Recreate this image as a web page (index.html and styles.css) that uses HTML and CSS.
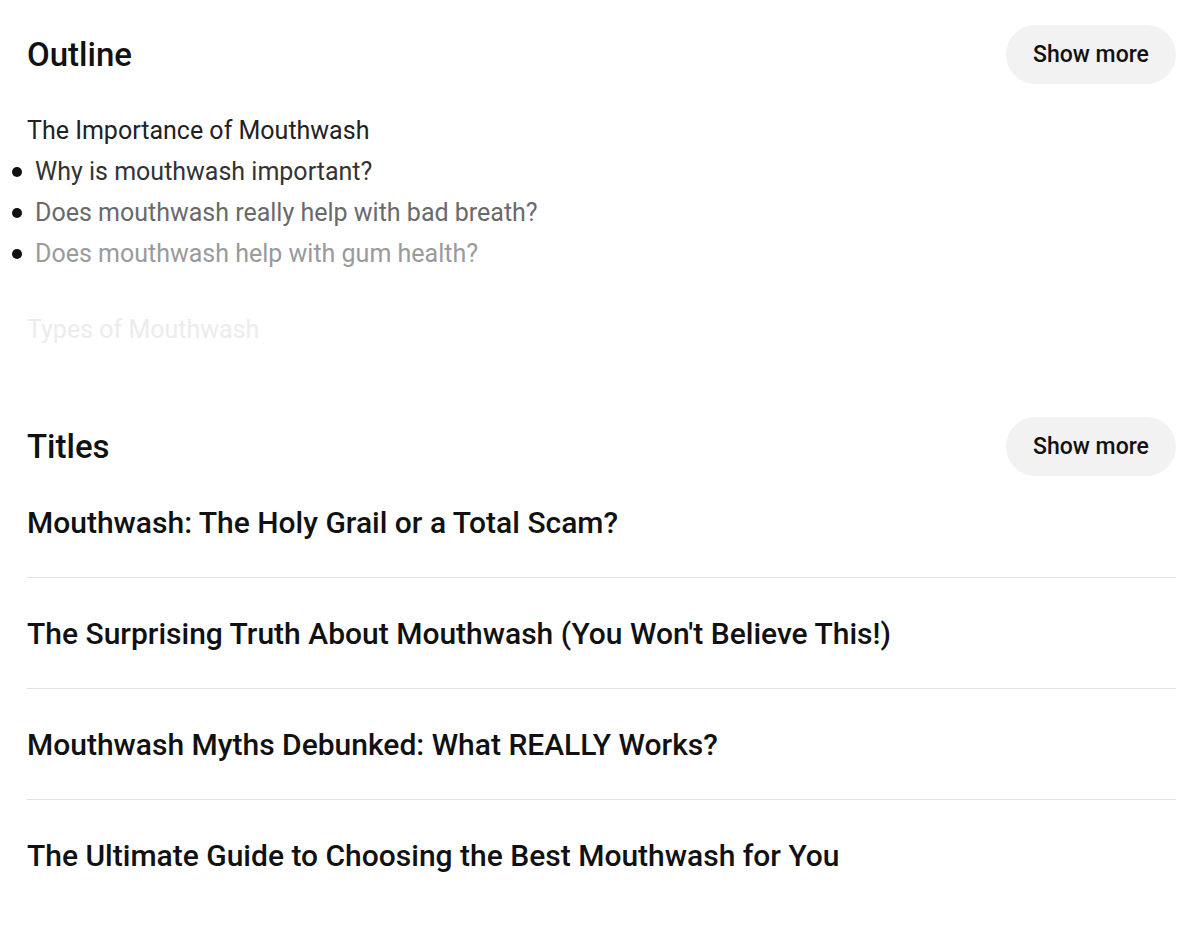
FILE: index.html
```html
<!DOCTYPE html>
<html>
<head>
<meta charset="utf-8">
<link rel="stylesheet" href="styles.css">
</head>
<body>
<div class="page">
  <section class="outline">
    <div class="head">
      <h2 class="title">Outline</h2>
      <button class="more">Show more</button>
    </div>
    <div class="outline-body">
      <p class="sec c1">The Importance of Mouthwash</p>
      <ul class="items">
        <li class="c2">Why is mouthwash important?</li>
        <li class="c3">Does mouthwash really help with bad breath?</li>
        <li class="c4">Does mouthwash help with gum health?</li>
      </ul>
      <p class="sec c5">Types of Mouthwash</p>
    </div>
  </section>
  <section class="titles">
    <div class="head">
      <h2 class="title">Titles</h2>
      <button class="more">Show more</button>
    </div>
    <ul class="tlist">
      <li>Mouthwash: The Holy Grail or a Total Scam?</li>
      <li>The Surprising Truth About Mouthwash (You Won't Believe This!)</li>
      <li>Mouthwash Myths Debunked: What REALLY Works?</li>
      <li>The Ultimate Guide to Choosing the Best Mouthwash for You</li>
    </ul>
  </section>
</div>
</body>
</html>
```
FILE: styles.css
```css
* { box-sizing: border-box; }
body {
  margin: 0;
  background: #fff;
  font-family: Roboto, "Noto Sans", sans-serif;
  color: #111;
}
.page {
  padding: 25px 24px 0 27px;
}
.head {
  display: flex;
  justify-content: space-between;
  align-items: center;
  height: 59px;
}
.title {
  margin: 0;
  font-size: 33px;
  font-weight: 500;
  color: #111;
}
.more {
  width: 170px;
  height: 59px;
  border: none;
  border-radius: 30px;
  background: #f2f2f2;
  font-family: Roboto, sans-serif;
  font-size: 23px;
  font-weight: 500;
  color: #111;
  padding: 0;
}
.outline-body {
  margin-top: 26px;
  font-size: 25px;
  line-height: 41px;
}
.sec { margin: 0; }
.items {
  margin: 0;
  padding: 0 0 0 8px;
  list-style: none;
}
.items li {
  position: relative;
}
.items li::before {
  content: "";
  position: absolute;
  left: -23px;
  top: 16px;
  width: 10px;
  height: 10px;
  border-radius: 50%;
  background: #111;
}
.c1 { color: #222; }
.c2 { color: #333; }
.c3 { color: #6a6a6a; }
.c4 { color: #9a9a9a; }
.c5 { color: #ececec; margin-top: 35px; }
.titles { margin-top: 67px; }
.tlist {
  list-style: none;
  margin: 0;
  padding: 0;
}
.tlist li {
  font-size: 30px;
  font-weight: 500;
  line-height: 35px;
  padding: 38px 0 37px;
  border-bottom: 1px solid #e3e3e3;
}
.tlist li:first-child { padding-top: 29px; }
.tlist li:last-child { border-bottom: none; }
```
